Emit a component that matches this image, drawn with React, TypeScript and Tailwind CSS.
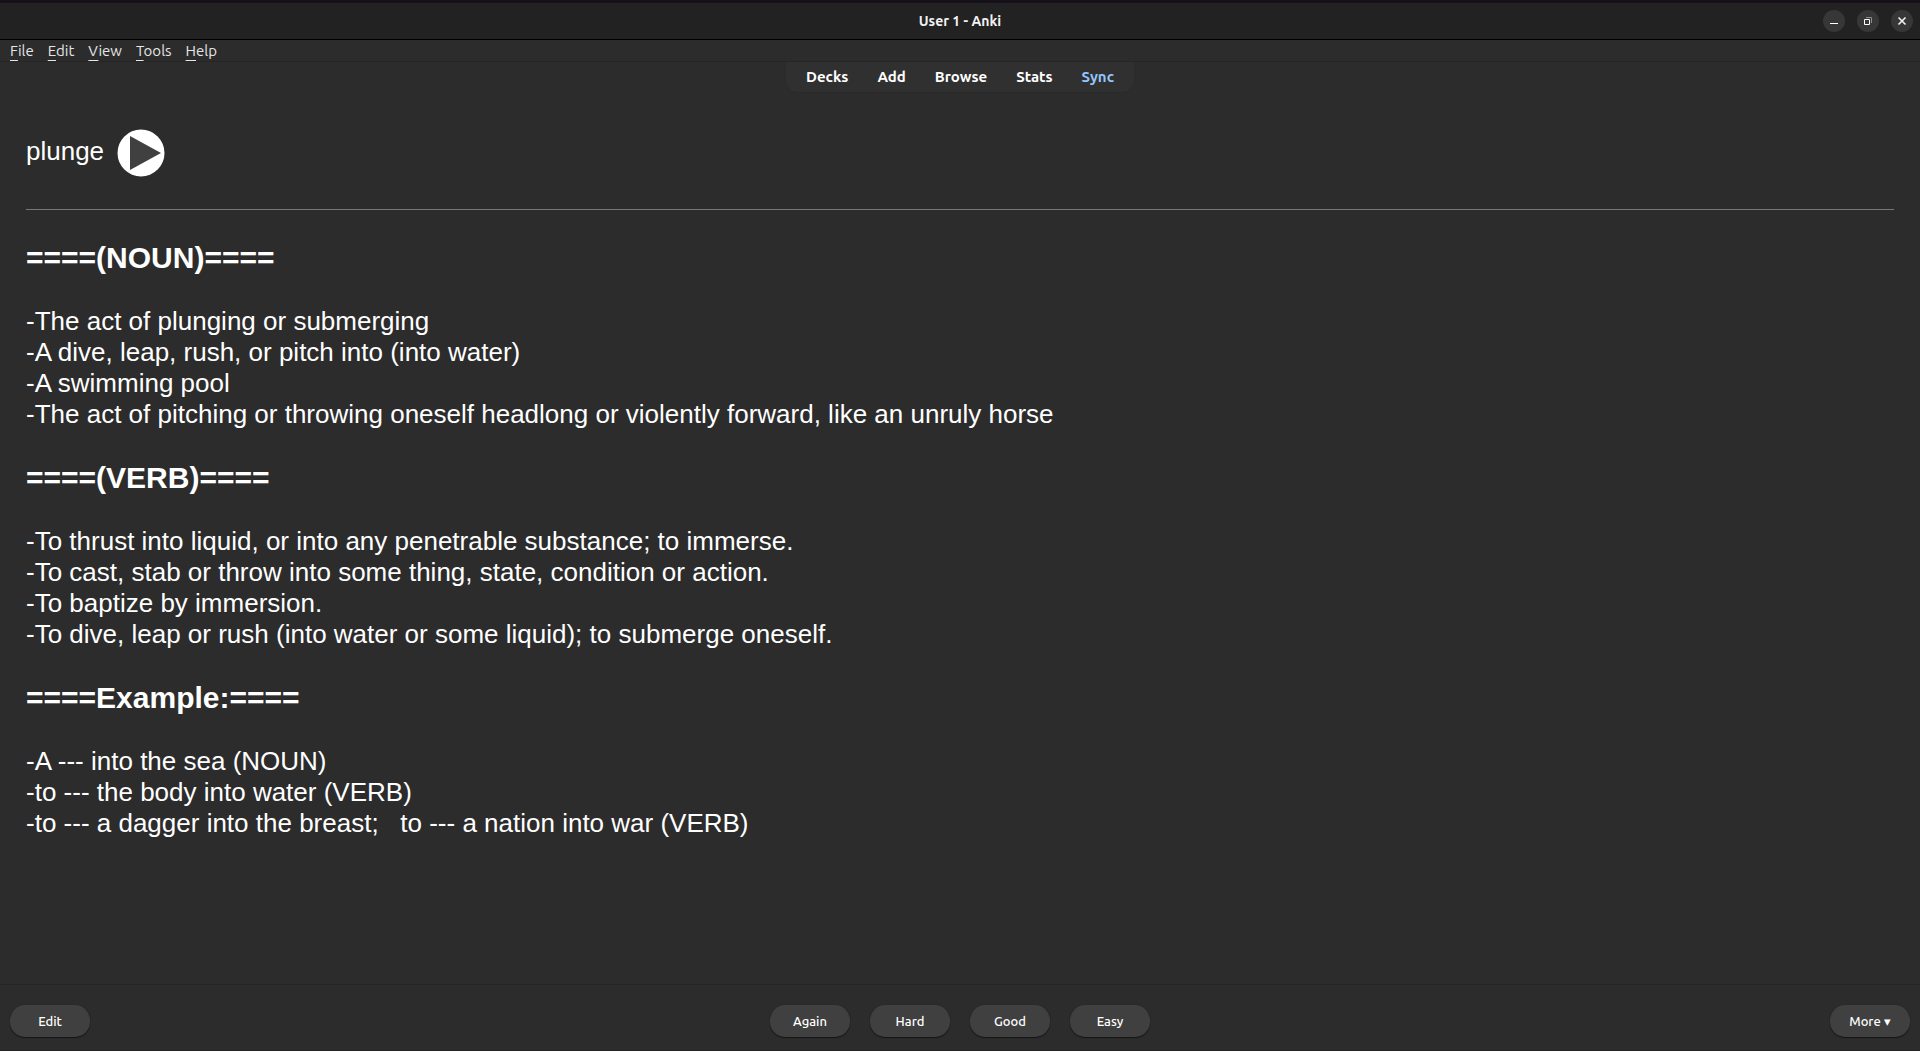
import React from "react";

const menus = ["File", "Edit", "View", "Tools", "Help"];

const links = ["Decks", "Add", "Browse", "Stats"];

const sections = [
  {
    title: "====(NOUN)====",
    lines: [
      "-The act of plunging or submerging",
      "-A dive, leap, rush, or pitch into (into water)",
      "-A swimming pool",
      "-The act of pitching or throwing oneself headlong or violently forward, like an unruly horse",
    ],
  },
  {
    title: "====(VERB)====",
    lines: [
      "-To thrust into liquid, or into any penetrable substance; to immerse.",
      "-To cast, stab or throw into some thing, state, condition or action.",
      "-To baptize by immersion.",
      "-To dive, leap or rush (into water or some liquid); to submerge oneself.",
    ],
  },
  {
    title: "====Example:====",
    lines: [
      "-A --- into the sea (NOUN)",
      "-to --- the body into water (VERB)",
      "-to --- a dagger into the breast;\u00a0\u00a0 to --- a nation into war (VERB)",
    ],
  },
];

function WindowButton({ label, children }: { label: string; children: React.ReactNode }) {
  return (
    <button aria-label={label} className="size-[22px] rounded-full bg-[#373737]">
      <svg viewBox="0 0 22 22" className="size-full" fill="none">
        {children}
      </svg>
    </button>
  );
}

function PillButton({ children }: { children: React.ReactNode }) {
  return (
    <button className="h-8 w-20 rounded-[15px] bg-[#404040] pt-px text-[13px] font-medium text-white shadow-[0_1px_1px_#141414,0_0_1px_#202020]">
      {children}
    </button>
  );
}

export default function App() {
  return (
    <div className="flex min-h-screen flex-col border-t-[3px] border-b border-t-[#15101a] border-b-[#2a1f24] bg-[#2c2c2c] font-['Ubuntu','Noto_Sans',sans-serif] text-white">
      <header className="grid h-[37px] grid-cols-3 items-center border-b border-black bg-[#222222] px-[7px]">
        <h1 className="col-start-2 text-center text-sm font-semibold text-[#f2f2f2]">User 1 - Anki</h1>
        <div className="flex justify-end gap-3">
          <WindowButton label="Minimize">
            <path d="M7 13.5h8" stroke="#fff" />
          </WindowButton>
          <WindowButton label="Restore">
            <path d="M9 7.5h5.5V13" stroke="#8f8f8f" />
            <path d="M7.5 9.5h5v5h-5z" stroke="#fff" />
          </WindowButton>
          <WindowButton label="Close">
            <path d="M7.5 7.5l7 7M14.5 7.5l-7 7" stroke="#f2f2f2" strokeWidth="1.6" />
          </WindowButton>
        </div>
      </header>

      <nav aria-label="Menu" className="flex h-[22px] items-center gap-[14px] border-b border-[#252525] px-[10px] text-[15px] leading-5 text-[#e6e6e6]">
        {menus.map((m) => (
          <button key={m}>
            <span className="underline decoration-1 underline-offset-4">{m[0]}</span>
            {m.slice(1)}
          </button>
        ))}
      </nav>

      <nav aria-label="Toolbar" className="mx-auto flex h-[31px] items-center gap-[29px] rounded-b-xl border-b border-[#2a2a2a] bg-[#303030] px-5 text-[15px] font-semibold">
        {links.map((l) => (
          <a key={l} href="#">{l}</a>
        ))}
        <a href="#" className="text-[#93c5fd]">Sync</a>
      </nav>

      <main className="flex-1 px-[26px] font-['Liberation_Sans',sans-serif] text-[26px] leading-[31px]">
        <div className="pt-9">
          plunge
          <button aria-label="Play" className="ml-[13px] size-12 align-middle">
            <svg viewBox="0 0 48 48" className="size-full">
              <circle cx="24" cy="24" r="23.5" fill="#fff" />
              <path d="M13 7v34l31-17z" fill="#404040" />
            </svg>
          </button>
        </div>
        <hr className="mt-8 border-[#777777]" />
        {sections.map((s) => (
          <section key={s.title} className="pt-[30px]">
            <h2 className="pb-[30px] text-[30px] font-bold leading-9">{s.title}</h2>
            {s.lines.map((l) => (
              <p key={l}>{l}</p>
            ))}
          </section>
        ))}
      </main>

      <footer className="grid grid-cols-[1fr_auto_1fr] border-t border-[#252525] px-[10px] pt-5 pb-[13px]">
        <PillButton>Edit</PillButton>
        <div className="flex gap-5">
          <PillButton>Again</PillButton>
          <PillButton>Hard</PillButton>
          <PillButton>Good</PillButton>
          <PillButton>Easy</PillButton>
        </div>
        <div className="text-right">
          <PillButton>More ▾</PillButton>
        </div>
      </footer>
    </div>
  );
}
